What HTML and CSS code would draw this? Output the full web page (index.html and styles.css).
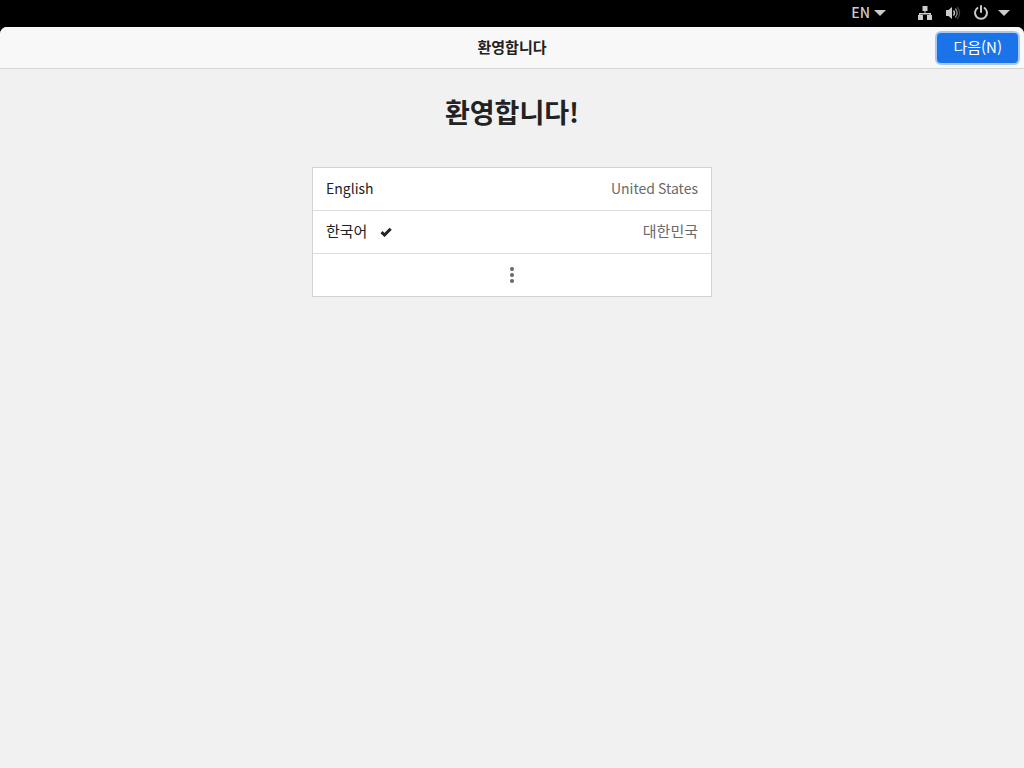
FILE: index.html
```html
<!DOCTYPE html>
<html lang="ko">
<head>
<meta charset="utf-8">
<meta name="viewport" content="width=device-width, initial-scale=1">
<title>환영합니다</title>
<link rel="stylesheet" href="styles.css">
</head>
<body class="screen">
<nav class="topbar" aria-label="시스템">
  <button class="topbar-button input-menu" type="button"><span class="label">EN</span>
    <svg class="arrow" viewBox="0 0 12 6" aria-hidden="true"><path d="M0 0h12L6 6z"/></svg>
  </button>
  <button class="topbar-button system-menu" type="button" aria-label="시스템 메뉴">
    <svg class="icon" viewBox="0 0 16 16" aria-hidden="true"><path d="M5.500 1h5v5h-2v2H14v2h1v5h-5v-5h2.500V9.500h-9V10H6v5H1v-5h1V8h5.500V6h-2z"/></svg>
    <svg class="icon" viewBox="0 0 16 16" aria-hidden="true"><path d="M1 5h2.500L7 2v12l-3.500-3H1z"/><g fill="none" stroke="currentColor" stroke-width="1.300"><path d="M8.500 5.500q2 2.500 0 5"/><path d="M10.300 3.500q3.600 4.500 0 9" opacity=".7"/><path d="M12.200 2q4.800 6 0 12" opacity=".3"/></g></svg>
    <svg class="icon" viewBox="0 0 16 16" aria-hidden="true"><g fill="none" stroke="currentColor" stroke-width="2" stroke-linecap="round"><path d="M8 1v6"/><path d="M4.500 3a6 6 0 1 0 7 0"/></g></svg>
    <svg class="arrow system-arrow" viewBox="0 0 12 6" aria-hidden="true"><path d="M0 0h12L6 6z"/></svg>
  </button>
</nav>
<div class="window">
  <header class="headerbar">
    <span class="window-title label">환영합니다</span>
    <button class="next" type="button"><span class="label">다음(N)</span></button>
  </header>
  <main class="page">
    <h1 class="heading">환영합니다!</h1>
    <ul class="languages">
      <li class="item"><button class="row latin" type="button" lang="en"><span class="label">English</span><span class="label country">United States</span></button></li>
      <li class="item"><button class="row" type="button" aria-pressed="true"><span class="label">한국어</span><svg class="check" viewBox="0 0 12 10" aria-hidden="true"><path d="M1.500 5.200l3 2.800L10.700 1.700" fill="none" stroke="currentColor" stroke-width="3"/></svg><span class="label country">대한민국</span></button></li>
      <li class="item"><button class="row more" type="button" aria-label="더 보기"><svg class="dots" viewBox="0 0 4 16" aria-hidden="true"><circle cx="2" cy="2" r="2"/><circle cx="2" cy="8" r="2"/><circle cx="2" cy="14" r="2"/></svg></button></li>
    </ul>
  </main>
</div>
</body>
</html>
```
FILE: styles.css
```css
* {
  box-sizing: border-box;
}

.screen {
  margin: 0;
  min-height: 100vh;
  display: flex;
  flex-direction: column;
  background: #000;
  color: #222;
  font: 15px/20px "Noto Sans CJK KR", sans-serif;
}

button {
  font: inherit;
  color: inherit;
  border: 0;
  background: none;
  cursor: pointer;
}

svg {
  fill: currentColor;
  flex: none;
}

.label {
  display: block;
  padding-bottom: 2px;
}

.topbar {
  display: flex;
  justify-content: flex-end;
  gap: 31px;
  min-height: 27px;
  padding: 0 14px 1px 0;
  color: #ccc;
}

.topbar-button {
  display: flex;
  align-items: center;
  padding: 0;
}

.input-menu {
  gap: 4px;
  font-weight: 500;
  font-size: 14px;
}

.system-menu {
  gap: 12px;
}

.arrow {
  width: 12px;
  height: 6px;
}

.system-arrow {
  margin-left: -3px;
}

.icon {
  width: 16px;
  height: 16px;
}

.window {
  flex: 1;
  border-radius: 7px 7px 0 0;
  overflow: hidden;
  background: #f1f1f1;
}

.headerbar {
  display: grid;
  grid-template-columns: 1fr auto 1fr;
  align-items: center;
  min-height: 42px;
  padding: 0 6px;
  background: #f8f8f8;
  border-bottom: 1px solid #d5d5d5;
}

.window-title {
  grid-column: 2;
  font-weight: 700;
}

.next {
  justify-self: end;
  min-height: 30px;
  padding: 0 16px;
  border-radius: 4px;
  background: #1a73e8;
  box-shadow: 0 0 0 2px #a5c8f5;
  color: #fff;
}

.page {
  padding: 23px 24px;
}

.heading {
  margin: 0 0 35px;
  font-size: 27px;
  line-height: 40px;
  font-weight: 700;
  text-align: center;
}

.languages {
  max-width: 400px;
  margin: 0 auto;
  padding: 0;
  list-style: none;
  background: #fff;
  border: 1px solid #d3d3d3;
}

.item + .item {
  border-top: 1px solid #dcdcdc;
}

.row {
  display: flex;
  align-items: center;
  width: 100%;
  min-height: 42px;
  padding: 0 13px;
}

.latin {
  font-size: 14px;
}

.country {
  margin-left: auto;
  color: #6a6a6a;
}

.check {
  width: 12px;
  height: 10px;
  margin-left: 13px;
}

.more {
  justify-content: center;
  color: #666;
}

.dots {
  width: 4px;
  height: 16px;
}
```
